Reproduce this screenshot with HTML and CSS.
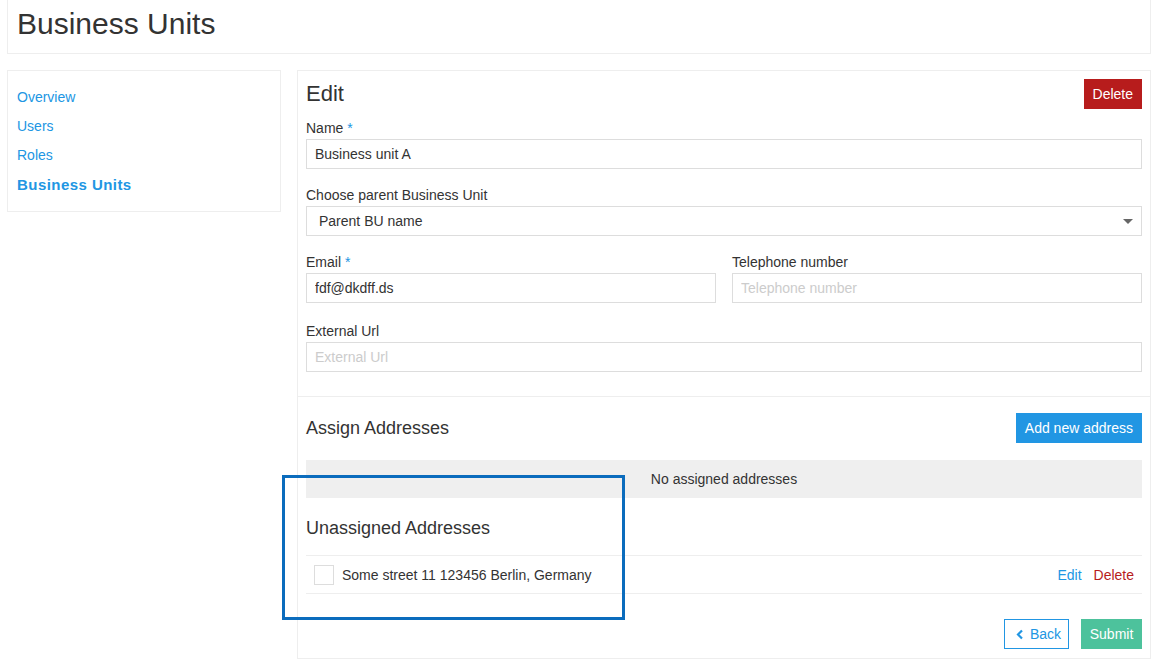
FILE: index.html
```html
<!DOCTYPE html>
<html>
<head>
<meta charset="utf-8">
<link rel="stylesheet" href="styles.css">
</head>
<body>
<div class="page">
  <header class="page-header"><h1>Business Units</h1></header>
  <div class="layout">
    <nav class="sidebar">
      <a href="#">Overview</a>
      <a href="#">Users</a>
      <a href="#">Roles</a>
      <a href="#" class="active">Business Units</a>
    </nav>
    <main class="panel">
      <section class="section">
        <div class="row-head">
          <h2 class="h-edit">Edit</h2>
          <button class="btn btn-red">Delete</button>
        </div>
        <div class="group">
          <label>Name <span class="req">*</span></label>
          <input class="field" type="text" value="Business unit A">
        </div>
        <div class="group">
          <label>Choose parent Business Unit</label>
          <div class="select">Parent BU name<span class="caret"></span></div>
        </div>
        <div class="group two">
          <div>
            <label>Email <span class="req">*</span></label>
            <input class="field" type="text" value="fdf@dkdff.ds">
          </div>
          <div>
            <label>Telephone number</label>
            <input class="field" type="text" placeholder="Telephone number">
          </div>
        </div>
        <div class="group last">
          <label>External Url</label>
          <input class="field" type="text" placeholder="External Url">
        </div>
      </section>
      <section class="section addr">
        <div class="row-head">
          <h3>Assign Addresses</h3>
          <button class="btn btn-blue">Add new address</button>
        </div>
        <div class="empty">No assigned addresses</div>
        <h3 class="h-unassigned">Unassigned Addresses</h3>
        <div class="addr-row">
          <span class="check"></span>
          <span class="addr-text">Some street 11 123456 Berlin, Germany</span>
          <a href="#" class="lnk-edit">Edit</a>
          <a href="#" class="lnk-del">Delete</a>
        </div>
        <div class="actions">
          <button class="btn btn-outline"><svg width="8" height="11" viewBox="0 0 8 11"><path d="M6 1.5 L2 5.5 L6 9.5" fill="none" stroke="#2196e3" stroke-width="2.2"/></svg>Back</button>
          <button class="btn btn-green">Submit</button>
        </div>
        <div class="highlight"></div>
      </section>
    </main>
  </div>
</div>
</body>
</html>
```

FILE: styles.css
```css
* { box-sizing: border-box; }
html, body { margin: 0; padding: 0; background: #fff; }
body {
  font-family: "Liberation Sans", Arial, sans-serif;
  font-size: 14px;
  color: #333;
}
.page { padding: 0 3px 0 7px; }
.page-header {
  border: 1px solid #eee;
  border-top: none;
  height: 54px;
  padding: 0 9px;
}
.page-header h1 {
  margin: 0;
  font-weight: normal;
  font-size: 30px;
  line-height: 48px;
  color: #333;
}
.layout {
  display: flex;
  gap: 16px;
  margin-top: 16px;
  align-items: flex-start;
}
.sidebar {
  width: 274px;
  flex: none;
  border: 1px solid #eee;
  padding: 12px 9px;
  display: flex;
  flex-direction: column;
}
.sidebar a {
  color: #2196e3;
  text-decoration: none;
  line-height: 29px;
  font-size: 14px;
}
.sidebar a.active {
  font-weight: bold;
  font-size: 15px;
  letter-spacing: 0.45px;
}
.panel {
  flex: 1;
  border: 1px solid #eee;
  min-width: 0;
}
.section { padding: 8px 8px 24px; }
.section.addr {
  border-top: 1px solid #eee;
  padding: 16px 8px 9px;
  position: relative;
}
.row-head {
  display: flex;
  justify-content: space-between;
  align-items: center;
  height: 30px;
}
.h-edit {
  margin: 0;
  font-size: 22px;
  font-weight: normal;
  color: #333;
}
h3 {
  margin: 0;
  font-size: 18px;
  font-weight: normal;
  color: #333;
}
.row-head + .group { margin-top: 11px; }
.group { margin-bottom: 18px; }
.group.two { margin-bottom: 20px; }
.group.last { margin-bottom: 0; }
.group.two {
  display: grid;
  grid-template-columns: 1fr 1fr;
  gap: 16px;
}
label {
  display: block;
  line-height: 16px;
  margin-bottom: 3px;
  color: #333;
}
.req { color: #2196e3; }
.field {
  display: block;
  width: 100%;
  height: 30px;
  border: 1px solid #ddd;
  padding: 0 8px;
  font-family: inherit;
  font-size: 14px;
  color: #333;
  outline: none;
  border-radius: 0;
}
.field::placeholder { color: #ccc; }
.select {
  position: relative;
  height: 30px;
  border: 1px solid #ddd;
  padding: 0 12px;
  line-height: 28px;
}
.caret {
  position: absolute;
  right: 8px;
  top: 12px;
  width: 0;
  height: 0;
  border-left: 5px solid transparent;
  border-right: 5px solid transparent;
  border-top: 5px solid #666;
}
.btn {
  height: 30px;
  border: none;
  padding: 0 9px;
  font-family: inherit;
  font-size: 14px;
  color: #fff;
  border-radius: 0;
  cursor: pointer;
  display: inline-flex;
  align-items: center;
  gap: 6px;
}
.btn-red { background: #b71c1c; }
.btn-blue { background: #2196e3; }
.btn-green { background: #4dc29c; padding: 0 9px; width: 61px; justify-content: center; }
.btn-outline {
  background: #fff;
  border: 1px solid #2196e3;
  color: #2196e3;
  padding: 0 0 0 11px;
  width: 65px;
}
.empty {
  margin-top: 17px;
  background: #efefef;
  height: 38px;
  line-height: 38px;
  text-align: center;
  color: #333;
}
.h-unassigned {
  margin-top: 19px;
  line-height: 22px;
}
.addr-row {
  margin-top: 16px;
  border-top: 1px solid #eee;
  border-bottom: 1px solid #eee;
  height: 39px;
  display: flex;
  align-items: center;
  padding: 0 8px 0 8px;
}
.check {
  width: 20px;
  height: 20px;
  border: 1px solid #ddd;
  flex: none;
  margin-right: 8px;
}
.addr-text { flex: 1; }
.addr-row a { text-decoration: none; }
.lnk-edit { color: #2196e3; margin-right: 12px; }
.lnk-del { color: #b71c1c; }
.actions {
  display: flex;
  justify-content: flex-end;
  gap: 12px;
  margin-top: 25px;
}
.highlight {
  position: absolute;
  left: -16px;
  top: 78px;
  width: 343px;
  height: 145px;
  border: 3px solid #0b6cbd;
  pointer-events: none;
}
```
